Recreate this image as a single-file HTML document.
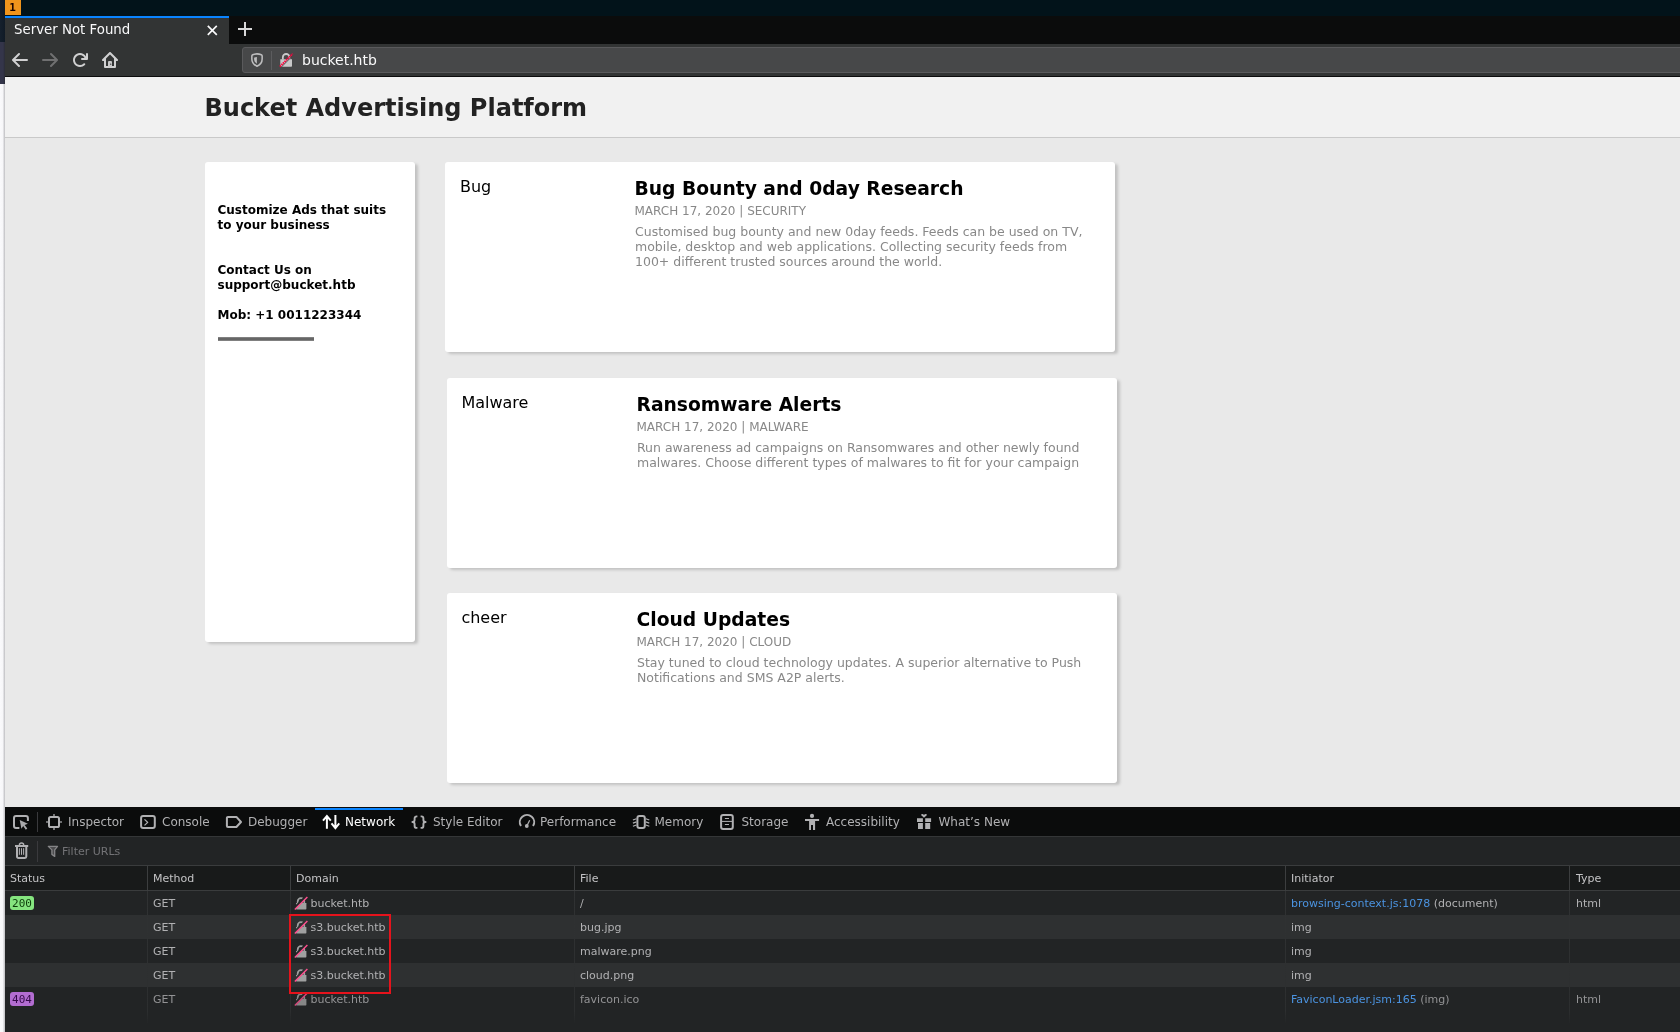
<!DOCTYPE html>
<html lang="en">
<head>
<meta charset="utf-8">
<title>Server Not Found</title>
<style>
*{box-sizing:border-box;margin:0;padding:0}
html,body{width:1680px;height:1032px;overflow:hidden;background:#f5f5f7}
body{position:relative;font-family:"DejaVu Sans","Liberation Sans",sans-serif;font-size:12px;color:#000}
#root{position:absolute;left:0;top:0;width:1680px;height:1032px;will-change:transform}
.abs{position:absolute}
.t{position:absolute;white-space:nowrap;line-height:1}
/* desktop */
#desk-top{left:0;top:0;width:1680px;height:16px;background:#02131a}
#strip1{left:0;top:0;width:5px;height:42px;background:linear-gradient(to right,#15202d,#101a26)}
#strip2{left:0;top:42px;width:5px;height:42px;background:linear-gradient(to right,#34354a 0,#34354a 60%,#2a2c36 100%)}
#strip3{left:0;top:84px;width:5px;height:948px;background:linear-gradient(to right,#fafafc 0,#f7f7f9 50%,#dcdcdf 75%,#bdbdc0 100%)}
#ws{left:5px;top:0;width:16px;height:15px;background:#ef941c;color:#160000;font:bold 11px "DejaVu Sans Mono","Liberation Mono",monospace;line-height:16px;text-align:center;padding-right:1px;overflow:hidden}
/* browser chrome */
#tabbar{left:5px;top:16px;width:1675px;height:28px;background:#0b0c0c}
#tab{left:5px;top:16px;width:224px;height:28px;background:#323434;border-top:2px solid #0a84ff}
#navbar{left:5px;top:44px;width:1675px;height:33px;background:#323434;border-bottom:1px solid #0c0c0d}
#url{left:242px;top:47px;width:1441px;height:26px;background:#474849;border:1px solid #5a5a5c;border-radius:3px}
/* page */
#page{left:5px;top:77px;width:1675px;height:730px;background:#e9e9e9;overflow:hidden}
#hdr{left:0;top:0;width:1675px;height:61px;background:#f1f1f1;border-bottom:1px solid #c9c9c9}
.card{position:absolute;background:#fff;border-radius:3px;box-shadow:3px 2px 3px rgba(0,0,0,.17)}
.side b{position:absolute;left:12.500px;font-size:12px;line-height:15px;font-weight:bold;white-space:nowrap}
.alt{position:absolute;left:15px;top:15px;font-size:16px;line-height:19px}
.h2{position:absolute;left:189.500px;top:15px;font-size:18.720px;line-height:24px;font-weight:bold;white-space:nowrap}
.meta{position:absolute;left:189.500px;top:42.300px;font-size:12px;line-height:14px;color:#888;white-space:nowrap}
.desc{position:absolute;left:190px;top:62px;width:470px;white-space:nowrap;font-size:12.500px;line-height:15px;color:#888}
/* devtools */
#dt{left:5px;top:807px;width:1675px;height:225px;background:#222425}
#dtbar{left:0;top:0;width:1675px;height:30px;background:#0b0c0c;border-bottom:1px solid #343637}
#dtfilter{left:0;top:30px;width:1675px;height:29px;background:#222425;border-bottom:1px solid #3a3c3d}
#dthead{left:0;top:59px;width:1675px;height:25px;background:#181a1a;border-bottom:1px solid #3a3c3d}
.row{position:absolute;left:0;width:1675px;height:24px}
.row.odd{background:#2e3031}
.dtt{position:absolute;white-space:nowrap;font-size:11px;line-height:14px;color:#b1b1b3}
.tabl{position:absolute;white-space:nowrap;font-size:12px;line-height:15px;color:#b1b1b3;top:8px}
.col{position:absolute;top:59px;width:1px;height:158px;background:linear-gradient(#3c3e3f 0,#3c3e3f 25px,#303233 25px,#2c2e2f 145px,#222425 158px)}
.code{position:absolute;left:4px;font:11px "DejaVu Sans Mono","Liberation Mono",monospace;line-height:13px;height:13px;padding:0 2px;border-radius:3px;color:#18181a}
.ic{position:absolute}
</style>
</head>
<body>
<div id="root">
<div class="abs" id="desk-top"></div>
<div class="abs" id="strip1"></div>
<div class="abs" id="strip2"></div>
<div class="abs" id="strip3"></div>
<div class="abs" id="ws">1</div>

<div class="abs" id="tabbar"></div>
<div class="abs" id="tab"></div>
<div class="t" style="left:14px;top:23px;font-size:13.33px;color:#f9f9fa">Server Not Found</div>
<div class="abs" id="navbar"></div>
<div class="abs" id="url"></div>
<div class="t" style="left:302px;top:53px;font-size:14px;color:#f9f9fa">bucket.htb</div>


<!--CHROME-ICONS-->
<svg class="ic" style="left:206.500px;top:24.600px" width="11" height="11" viewBox="0 0 11 11"><path d="M.8.800l9 9M9.800.800L.8 9.800" stroke="#f9f9fa" stroke-width="1.700" fill="none"/></svg>
<svg class="ic" style="left:238px;top:22px" width="14" height="14" viewBox="0 0 14 14"><path d="M7 0v14M0 7h14" stroke="#d7d7d8" stroke-width="2" fill="none"/></svg>
<svg class="ic" style="left:12px;top:52px" width="16" height="16" viewBox="0 0 16 16"><path fill="#d0d0d1" d="M15 7H3.414l4.293-4.293a1 1 0 0 0-1.414-1.414l-6 6a1 1 0 0 0 0 1.414l6 6a1 1 0 0 0 1.414-1.414L3.414 9H15a1 1 0 0 0 0-2z"/></svg>
<svg class="ic" style="left:42px;top:52px" width="16" height="16" viewBox="0 0 16 16"><path fill="#707071" d="M15.707 7.293l-6-6a1 1 0 0 0-1.414 1.414L12.586 7H1a1 1 0 0 0 0 2h11.586l-4.293 4.293a1 1 0 1 0 1.414 1.414l6-6a1 1 0 0 0 0-1.414z"/></svg>
<svg class="ic" style="left:72px;top:52px" width="16" height="16" viewBox="0 0 16 16"><path fill="#d0d0d1" d="M15 1a1 1 0 0 0-1 1v2.418A6.995 6.995 0 1 0 8 15a6.954 6.954 0 0 0 4.950-2.050 1 1 0 0 0-1.414-1.414A5.019 5.019 0 1 1 12.549 6H10a1 1 0 0 0 0 2h5a1 1 0 0 0 1-1V2a1 1 0 0 0-1-1z"/></svg>
<svg class="ic" style="left:102px;top:52px" width="16" height="16" viewBox="0 0 16 16"><path fill="#d0d0d1" fill-rule="evenodd" d="M15.707 7.293l-7-7a1 1 0 0 0-1.414 0l-7 7A1 1 0 0 0 1 9h1v6a1 1 0 0 0 1 1h10a1 1 0 0 0 1-1V9h1a1 1 0 0 0 .707-1.707zM12 14H4V6.414l4-4 4 4z"/><path fill="#c8c8c9" d="M6 10a1 1 0 0 1 1-1h2a1 1 0 0 1 1 1v4.500H6z"/><circle cx="8.700" cy="12.200" r=".650" fill="#323234"/></svg>
<svg class="ic" style="left:250px;top:52px" width="14" height="16" viewBox="0 0 14 16"><path d="M2.700 2.650Q7 1.100 11.300 2.650Q12.150 2.950 12.150 3.900V7C12.150 10.400 10 12.900 7 14.250C4 12.900 1.850 10.400 1.850 7V3.900Q1.850 2.950 2.700 2.650Z" fill="none" stroke="#bdbdbe" stroke-width="1.550" stroke-linejoin="round"/><path d="M6.900 4.900V11.700C5.200 10.600 4.100 9 4.100 7V5.700Q5.500 5.150 6.900 4.900Z" fill="#bdbdbe"/></svg>
<div class="abs" style="left:271px;top:51px;width:1px;height:19px;background:#5c5c5e"></div>
<svg class="ic" style="left:279px;top:52px" width="15" height="16" viewBox="0 0 15 16"><path d="M3.850 7.600V5.300a3.300 3.300 0 0 1 6.600 0V7.600" fill="none" stroke="#c8c8c9" stroke-width="1.800"/><path d="M1.300 7.200h11.700v6.800a.8.800 0 0 1-.8.800H2.100a.8.800 0 0 1-.8-.8z" fill="#c8c8c9"/><path d="M.900 14.600L13.700 1.800" stroke="#ff003c" stroke-width="2" stroke-dasharray="1.500 .7"/><path d="M2.300 15.100L14.600 2.800" stroke="#474849" stroke-width="1" opacity=".9"/></svg>
<!--/CHROME-ICONS-->
<div class="abs" id="page">
  <div class="abs" id="hdr"></div>
  <div class="t" style="left:199.500px;top:17px;font-size:24px;font-weight:bold;color:#222;line-height:29px">Bucket Advertising Platform</div>

  <div class="card side" style="left:200px;top:85px;width:210px;height:480px">
    <b style="top:41px">Customize Ads that suits<br>to your business</b>
    <b style="top:101px">Contact Us on<br>support@bucket.htb</b>
    <b style="top:145.700px">Mob: +1 0011223344</b>
    <div class="abs" style="left:13px;top:175px;width:96px;height:4px;background:#666;border-top:1px solid #808080;border-bottom:1px solid #808080"></div>
  </div>

  <div class="card" style="left:440px;top:84.500px;width:670px;height:190.500px">
    <div class="alt">Bug</div>
    <div class="h2">Bug Bounty and 0day Research</div>
    <div class="meta">MARCH 17, 2020 | SECURITY</div>
    <div class="desc">Customised bug bounty and new 0day feeds. Feeds can be used on TV,<br>mobile, desktop and web applications. Collecting security feeds from<br>100+ different trusted sources around the world.</div>
  </div>
  <div class="card" style="left:442px;top:300.700px;width:670px;height:190.400px">
    <div class="alt" style="left:14.400px">Malware</div>
    <div class="h2">Ransomware Alerts</div>
    <div class="meta">MARCH 17, 2020 | MALWARE</div>
    <div class="desc">Run awareness ad campaigns on Ransomwares and other newly found<br>malwares. Choose different types of malwares to fit for your campaign</div>
  </div>
  <div class="card" style="left:442px;top:515.800px;width:670px;height:190.300px">
    <div class="alt" style="left:14.400px">cheer</div>
    <div class="h2">Cloud Updates</div>
    <div class="meta">MARCH 17, 2020 | CLOUD</div>
    <div class="desc">Stay tuned to cloud technology updates. A superior alternative to Push<br>Notifications and SMS A2P alerts.</div>
  </div>
</div>

<div class="abs" id="dt">
  <div class="abs" id="dtbar"></div>
  <div class="abs" id="dtfilter"></div>
  <div class="abs" id="dthead"></div>
  <!--DTSTART-->
  <svg class="ic" style="left:7px;top:7px" width="18" height="16" viewBox="0 0 18 16" ><path d="M7.4 13.9H4a2 2 0 0 1-2-2V4a2 2 0 0 1 2-2h9.9a2 2 0 0 1 2 2v3.1" fill="none" stroke="#b1b1b3" stroke-linejoin="round" stroke-linecap="butt" stroke-width="2"/><path d="M7.7 6.1l8.200 3.600-3.300 1.200 2.700 3.700-1.500 1.100-2.600-3.800-1.800 2.900z" fill="#a9a9ab"/></svg>
  <div class="abs" style="left:32px;top:5px;width:1px;height:20px;background:#3a3a3d"></div>
  <svg class="ic" style="left:41px;top:7px" width="16" height="16" viewBox="0 0 16 16" ><rect x="3" y="3" width="10" height="10" rx="1.600" fill="none" stroke="#b1b1b3" stroke-linejoin="round" stroke-linecap="butt" stroke-width="2"/><path d="M8 0v2M8 14v2M0 8h2M14 8h2" fill="none" stroke="#8f8f91" stroke-width="1.600"/></svg>
  <div class="tabl" style="left:63px">Inspector</div>
  <svg class="ic" style="left:135px;top:7px" width="16" height="16" viewBox="0 0 16 16" ><rect x="1.100" y="2" width="13.700" height="11.900" rx="2" fill="none" stroke="#b1b1b3" stroke-linejoin="round" stroke-linecap="butt" stroke-width="2"/><path d="M4.500 5.400L7.700 8.400l-3.200 3" fill="none" stroke="#b1b1b3" stroke-linejoin="round" stroke-linecap="butt" stroke-width="1.300"/></svg>
  <div class="tabl" style="left:157px">Console</div>
  <svg class="ic" style="left:220px;top:7px" width="18" height="16" viewBox="0 0 18 16" ><path d="M2.900 2.900h8.500L16 8l-4.600 5H2.900a1 1 0 0 1-1-1V3.900a1 1 0 0 1 1-1z" fill="none" stroke="#b1b1b3" stroke-linejoin="round" stroke-linecap="butt" stroke-width="2"/></svg>
  <div class="tabl" style="left:243px">Debugger</div>
  <div class="abs" style="left:310px;top:1px;width:88px;height:2px;background:#0a84ff"></div>
  <svg class="ic" style="left:317px;top:7px" width="18" height="16" viewBox="0 0 18 16" ><path d="M4.900 14.750V2M1 6.700l3.900-4.700 3.900 4.700M13.400 1v12.800M9.500 9.400l3.900 4.700 3.900-4.700" fill="none" stroke="#fff" stroke-width="2" stroke-linejoin="miter" stroke-linecap="butt"/></svg>
  <div class="tabl" style="left:340px;color:#fff">Network</div>
  <svg class="ic" style="left:406px;top:7px" width="16" height="16" viewBox="0 0 16 16" ><path d="M6.400 2.400H5.600a2 2 0 0 0-2 2V6c0 1.200-.8 2-2.200 2 1.400 0 2.200.8 2.200 2v1.900a2 2 0 0 0 2 2h.8M9.600 2.400h.8a2 2 0 0 1 2 2V6c0 1.200.8 2 2.200 2-1.400 0-2.200.8-2.200 2v1.900a2 2 0 0 1-2 2h-.8" fill="none" stroke="#b1b1b3" stroke-linejoin="round" stroke-linecap="butt" stroke-width="1.900"/></svg>
  <div class="tabl" style="left:428px">Style Editor</div>
  <svg class="ic" style="left:513px;top:6px" width="18" height="18" viewBox="0 0 18 18" ><path d="M2.960 13.020A7.200 7.200 0 1 1 15.040 13.020" fill="none" stroke="#b1b1b3" stroke-linejoin="round" stroke-linecap="butt" stroke-width="2"/><path d="M8.800 13l2.900-5.800" fill="none" stroke="#b1b1b3" stroke-linejoin="round" stroke-linecap="butt" stroke-width="1.300"/><circle cx="8.800" cy="13" r="1.900" fill="#b1b1b3"/></svg>
  <div class="tabl" style="left:535px">Performance</div>
  <svg class="ic" style="left:627px;top:7px" width="18" height="16" viewBox="0 0 18 16" ><rect x="5.400" y="2" width="7.400" height="11.900" rx="2" fill="none" stroke="#b1b1b3" stroke-linejoin="round" stroke-linecap="butt" stroke-width="2"/><path d="M.9 6L4.400 4.700M.9 9.100L4.400 7.900M.9 12.300L4.400 11M17.300 6L13.800 4.700M17.300 9.100L13.800 7.900M17.300 12.300L13.800 11" fill="none" stroke="#b1b1b3" stroke-linejoin="round" stroke-linecap="butt" stroke-width="1.200"/></svg>
  <div class="tabl" style="left:649.5px">Memory</div>
  <svg class="ic" style="left:714px;top:6px" width="16" height="18" viewBox="0 0 16 18" ><rect x="2.100" y="2.100" width="11.700" height="13.900" rx="2" fill="none" stroke="#b1b1b3" stroke-linejoin="round" stroke-linecap="butt" stroke-width="2"/><path d="M2 8.400h12M5.900 5.500H10M5.900 11.500H10" fill="none" stroke="#b1b1b3" stroke-linejoin="round" stroke-linecap="butt" stroke-width="1"/></svg>
  <div class="tabl" style="left:736.5px">Storage</div>
  <svg class="ic" style="left:799px;top:6px" width="16" height="18" viewBox="0 0 16 18" ><circle cx="8" cy="2.950" r="2.100" fill="#b1b1b3"/><path d="M1 6.100h14.100V8H11.100v9H9V12H7v5H5.100V8H1z" fill="#b1b1b3"/></svg>
  <div class="tabl" style="left:821px">Accessibility</div>
  <svg class="ic" style="left:911px;top:6px" width="16" height="18" viewBox="0 0 16 18" ><path d="M1 5.200h5.900V9H1zM9.200 5.200h5.900V9H9.200zM2 10h4.900v6.100H2zM9.200 10h5v6.100h-5z" fill="#b1b1b3"/><path d="M8 4.800L5.200 2.200Q4.900.9 6.200.9 7.400.9 8 2.100 8.600.9 9.800.9 11.100.9 10.800 2.200Z" fill="#b1b1b3"/></svg>
  <div class="tabl" style="left:933.5px">What’s New</div>
  <svg class="ic" style="left:9px;top:35px" width="16" height="18" viewBox="0 0 16 18" ><path d="M1 4H14.200" fill="none" stroke="#b1b1b3" stroke-linejoin="round" stroke-linecap="butt" stroke-width="2"/><path d="M5.400 3.200a2.150 2.150 0 0 1 4.300 0" fill="none" stroke="#b1b1b3" stroke-linejoin="round" stroke-linecap="butt" stroke-width="1.400"/><path d="M3 5V14.600a1.400 1.400 0 0 0 1.400 1.400h6.500a1.400 1.400 0 0 0 1.400-1.400V5" fill="none" stroke="#b1b1b3" stroke-linejoin="round" stroke-linecap="butt" stroke-width="2"/><path d="M5.400 6.200v6.600M7.500 6.200v6.600M9.600 6.200v6.600" fill="none" stroke="#b1b1b3" stroke-linejoin="round" stroke-linecap="butt" stroke-width="1"/></svg>
  <div class="abs" style="left:32px;top:34px;width:1px;height:21px;background:#3a3a3d"></div>
  <svg class="ic" style="left:42px;top:38px" width="12" height="13" viewBox="0 0 12 13" ><path d="M1.300 1.400H10.500L7.700 4.900V11.400L4.900 9.400V4.900Z" fill="#4c4c4e" stroke="#858587" stroke-width="1.300" stroke-linejoin="round"/></svg>
  <div class="dtt" style="left:57px;top:38px;color:#737376">Filter URLs</div>
  <svg width="0" height="0" style="position:absolute"><defs><mask id="lkm" maskUnits="userSpaceOnUse" x="0" y="0" width="14" height="14"><rect width="14" height="14" fill="#fff"/><path d="M.2 12.400L12.400.2" stroke="#000" stroke-width="2.600"/></mask></defs></svg>
  <div class="row" style="top:84px"></div>
  <div class="code" style="left:5px;top:89px;background:#85e57f;color:#0b3b09;width:24px;height:14px;line-height:15px;padding:0;text-align:center">200</div>
  <div class="dtt" style="left:148px;top:90px;color:#b1b1b3">GET</div>
  <svg class="ic" style="left:288.5px;top:89px" width="14" height="14" viewBox="0 0 14 14" ><g opacity="1"><g mask="url(#lkm)"><path d="M3.700 7.500V5.400a3.300 3.300 0 0 1 6.600 0V7.500" fill="none" stroke="#9fa0a0" stroke-width="1.700"/><path d="M2 7h10.400v5.700a.7.700 0 0 1-.7.700H2.700a.7.700 0 0 1-.7-.7z" fill="#9fa0a0"/></g><path d="M.8 13.500L13.400.9" stroke="#ff4f8e" stroke-width="1.400"/></g></svg>
  <div class="dtt" style="left:305.500px;top:90px;color:#b1b1b3">bucket.htb</div>
  <div class="dtt" style="left:575px;top:90px;color:#b1b1b3">/</div>
  <div class="dtt" style="left:1286px;top:90px;color:#b1b1b3"><span style="color:#4b93e0">browsing-context.js:1078</span> (document)</div>
  <div class="dtt" style="left:1571px;top:90px;color:#b1b1b3">html</div>
  <div class="row odd" style="top:108px"></div>
  <div class="dtt" style="left:148px;top:114px;color:#b1b1b3">GET</div>
  <svg class="ic" style="left:288.5px;top:113px" width="14" height="14" viewBox="0 0 14 14" ><g opacity="1"><g mask="url(#lkm)"><path d="M3.700 7.500V5.400a3.300 3.300 0 0 1 6.600 0V7.500" fill="none" stroke="#9fa0a0" stroke-width="1.700"/><path d="M2 7h10.400v5.700a.7.700 0 0 1-.7.700H2.700a.7.700 0 0 1-.7-.7z" fill="#9fa0a0"/></g><path d="M.8 13.500L13.400.9" stroke="#ff4f8e" stroke-width="1.400"/></g></svg>
  <div class="dtt" style="left:305.500px;top:114px;color:#b1b1b3">s3.bucket.htb</div>
  <div class="dtt" style="left:575px;top:114px;color:#b1b1b3">bug.jpg</div>
  <div class="dtt" style="left:1286px;top:114px;color:#b1b1b3">img</div>
  <div class="row" style="top:132px"></div>
  <div class="dtt" style="left:148px;top:138px;color:#b1b1b3">GET</div>
  <svg class="ic" style="left:288.5px;top:137px" width="14" height="14" viewBox="0 0 14 14" ><g opacity="1"><g mask="url(#lkm)"><path d="M3.700 7.500V5.400a3.300 3.300 0 0 1 6.600 0V7.500" fill="none" stroke="#9fa0a0" stroke-width="1.700"/><path d="M2 7h10.400v5.700a.7.700 0 0 1-.7.700H2.700a.7.700 0 0 1-.7-.7z" fill="#9fa0a0"/></g><path d="M.8 13.500L13.400.9" stroke="#ff4f8e" stroke-width="1.400"/></g></svg>
  <div class="dtt" style="left:305.500px;top:138px;color:#b1b1b3">s3.bucket.htb</div>
  <div class="dtt" style="left:575px;top:138px;color:#b1b1b3">malware.png</div>
  <div class="dtt" style="left:1286px;top:138px;color:#b1b1b3">img</div>
  <div class="row odd" style="top:156px"></div>
  <div class="dtt" style="left:148px;top:162px;color:#b1b1b3">GET</div>
  <svg class="ic" style="left:288.5px;top:161px" width="14" height="14" viewBox="0 0 14 14" ><g opacity="1"><g mask="url(#lkm)"><path d="M3.700 7.500V5.400a3.300 3.300 0 0 1 6.600 0V7.500" fill="none" stroke="#9fa0a0" stroke-width="1.700"/><path d="M2 7h10.400v5.700a.7.700 0 0 1-.7.700H2.700a.7.700 0 0 1-.7-.7z" fill="#9fa0a0"/></g><path d="M.8 13.500L13.400.9" stroke="#ff4f8e" stroke-width="1.400"/></g></svg>
  <div class="dtt" style="left:305.500px;top:162px;color:#b1b1b3">s3.bucket.htb</div>
  <div class="dtt" style="left:575px;top:162px;color:#b1b1b3">cloud.png</div>
  <div class="dtt" style="left:1286px;top:162px;color:#b1b1b3">img</div>
  <div class="row" style="top:180px"></div>
  <div class="code" style="left:5px;top:185px;background:#b36dd1;color:#35094a;width:24px;height:14px;line-height:15px;padding:0;text-align:center">404</div>
  <div class="dtt" style="left:148px;top:186px;color:#939395">GET</div>
  <svg class="ic" style="left:288.5px;top:185px" width="14" height="14" viewBox="0 0 14 14" ><g opacity="0.8"><g mask="url(#lkm)"><path d="M3.700 7.500V5.400a3.300 3.300 0 0 1 6.600 0V7.500" fill="none" stroke="#9fa0a0" stroke-width="1.700"/><path d="M2 7h10.400v5.700a.7.700 0 0 1-.7.700H2.700a.7.700 0 0 1-.7-.7z" fill="#9fa0a0"/></g><path d="M.8 13.500L13.400.9" stroke="#ff4f8e" stroke-width="1.400"/></g></svg>
  <div class="dtt" style="left:305.500px;top:186px;color:#939395">bucket.htb</div>
  <div class="dtt" style="left:575px;top:186px;color:#939395">favicon.ico</div>
  <div class="dtt" style="left:1286px;top:186px;color:#939395"><span style="color:#4b93e0">FaviconLoader.jsm:165</span> (img)</div>
  <div class="dtt" style="left:1571px;top:186px;color:#939395">html</div>
  <div class="col" style="left:142px"></div>
  <div class="col" style="left:285px"></div>
  <div class="col" style="left:569px"></div>
  <div class="col" style="left:1280px"></div>
  <div class="col" style="left:1564px"></div>
  <div class="dtt" style="left:5px;top:65px;color:#c4c4c6">Status</div>
  <div class="dtt" style="left:148px;top:65px;color:#c4c4c6">Method</div>
  <div class="dtt" style="left:291px;top:65px;color:#c4c4c6">Domain</div>
  <div class="dtt" style="left:575px;top:65px;color:#c4c4c6">File</div>
  <div class="dtt" style="left:1286px;top:65px;color:#c4c4c6">Initiator</div>
  <div class="dtt" style="left:1571px;top:65px;color:#c4c4c6">Type</div>
  <div class="abs" style="left:284px;top:107px;width:102px;height:80px;border:2px solid #e5131c"></div>
  <!--DTEND-->
</div>
</div>
</body>
</html>
